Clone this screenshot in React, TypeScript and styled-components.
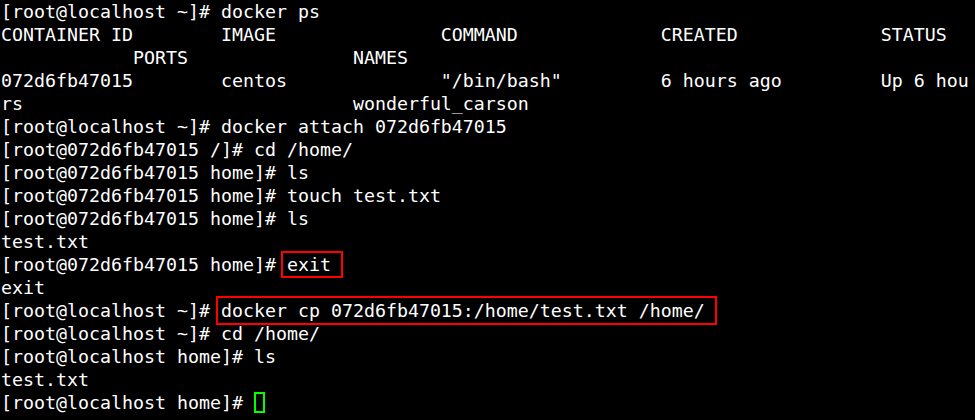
import React from "react";
import styled, { createGlobalStyle } from "styled-components";

const Global = createGlobalStyle`
  html, body { margin: 0; padding: 0; background: #000; }
  body { width: 975px; height: 420px; overflow: hidden; }
`;

const Terminal = styled.div`
  width: 975px;
  height: 420px;
  box-sizing: border-box;
  padding: 0 0 0 1px;
  background: #000;
  color: #ffffff;
  font-family: "DejaVu Sans Mono", "Liberation Mono", monospace;
  font-size: 18.27px;
  line-height: 23px;
  overflow: hidden;
`;

const Line = styled.div`
  height: 23px;
  white-space: pre;
`;

const Mark = styled.span<{ $l: number; $r: number; $t: number; $b: number }>`
  position: relative;
  &::after {
    content: "";
    position: absolute;
    left: ${(p) => p.$l}px;
    right: ${(p) => p.$r}px;
    top: ${(p) => p.$t}px;
    bottom: ${(p) => p.$b}px;
    border: 2px solid #f00;
    pointer-events: none;
  }
`;

const Cursor = styled.span`
  display: inline-block;
  width: 11px;
  height: 21px;
  box-sizing: border-box;
  border: 2px solid #00ff00;
  vertical-align: top;
  margin-top: 1px;
`;

const lines: string[] = [
  "[root@localhost ~]# docker ps",
  "CONTAINER ID        IMAGE               COMMAND             CREATED             STATUS",
  "            PORTS               NAMES",
  '072d6fb47015        centos              "/bin/bash"         6 hours ago         Up 6 hou',
  "rs                              wonderful_carson",
  "[root@localhost ~]# docker attach 072d6fb47015",
  "[root@072d6fb47015 /]# cd /home/",
  "[root@072d6fb47015 home]# ls",
  "[root@072d6fb47015 home]# touch test.txt",
  "[root@072d6fb47015 home]# ls",
  "test.txt",
];

export default function App() {
  return (
    <>
      <Global />
      <Terminal>
        {lines.map((l, i) => (
          <Line key={i}>{l}</Line>
        ))}
        <Line>
          {"[root@072d6fb47015 home]# "}
          <Mark $l={-6} $r={-12} $t={-3} $b={-3}>exit</Mark>
        </Line>
        <Line>exit</Line>
        <Line>
          {"[root@localhost ~]# "}
          <Mark $l={-5} $r={-12} $t={-4} $b={-4}>docker cp 072d6fb47015:/home/test.txt /home/</Mark>
        </Line>
        <Line>[root@localhost ~]# cd /home/</Line>
        <Line>[root@localhost home]# ls</Line>
        <Line>test.txt</Line>
        <Line>
          {"[root@localhost home]# "}
          <Cursor />
        </Line>
      </Terminal>
    </>
  );
}
